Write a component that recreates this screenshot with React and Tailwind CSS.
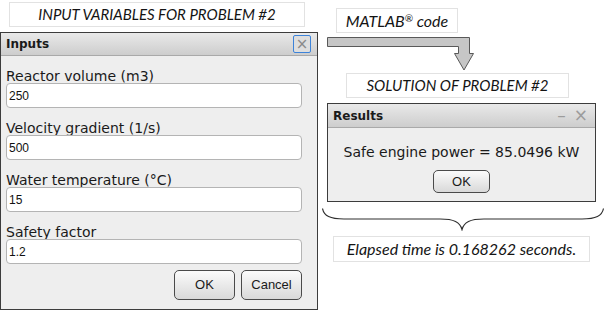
const sans = { fontFamily: '"DejaVu Sans", sans-serif' };

function Caption({ children, className }) {
  return (
    <div
      className={`flex items-center justify-center border border-[#e2e2e2] bg-white italic text-[#141414] ${className}`}
      style={{ fontFamily: 'Lato, "Open Sans", sans-serif' }}
    >
      {children}
    </div>
  );
}

function Button({ label, className }) {
  return (
    <button
      className={`rounded-[5px] border border-[#4a4a4a] bg-gradient-to-b from-[#fbfbfb] to-[#d9d9d9] text-[13px] text-[#1a1a1a] ${className}`}
      style={{ fontFamily: '"Liberation Sans", Arial, sans-serif' }}
    >
      {label}
    </button>
  );
}

function Field({ label, value }) {
  return (
    <div className="flex flex-col">
      <div className="h-[13px] text-[14px] leading-[13px] text-[#1a1a1a]" style={sans}>
        {label}
      </div>
      <div
        className="flex h-[25px] w-[296px] items-center rounded-[4px] border border-[#b4b4b4] bg-white pl-[2px] text-[12px] text-[#111]"
        style={{ fontFamily: '"Liberation Sans", Arial, sans-serif' }}
      >
        {value}
      </div>
    </div>
  );
}

function Arrow() {
  return (
    <svg width="148" height="34" viewBox="0 0 148 34" className="ml-[9px] mt-[4px] block">
      <polygon
        points="0.5,0.5 142.5,0.5 142.5,16.5 146.5,16.5 137,33 127.5,16.5 131.5,16.5 131.5,9.5 0.5,9.5"
        fill="#c6c6c6"
        stroke="#595959"
        strokeWidth="1"
      />
    </svg>
  );
}

function Brace() {
  return (
    <svg width="283" height="23" viewBox="0 0 283 23" className="ml-[4px] mt-[6px] block">
      <path
        d="M0.5,0.5 C2,8 8,11 22,11 L118,11 C132,11 138,14 140,21.5 C142,14 148,11 162,11 L260,11 C274,11 280,8 281.5,0.5"
        fill="none"
        stroke="#2e2e2e"
        strokeWidth="1.2"
      />
    </svg>
  );
}

export default function App() {
  return (
    <div className="flex h-[311px] w-[606px] overflow-hidden bg-white">
      <div className="flex w-[318px] shrink-0 flex-col">
        <Caption className="ml-[9px] mt-[2px] h-[25px] w-[296px] text-[15px]">INPUT VARIABLES FOR PROBLEM #2</Caption>

        <div className="mt-[5px] flex h-[278px] w-[318px] flex-col border border-[#3c3c3c] bg-[#eeeeee]">
          <div className="flex h-[23px] items-center justify-between border-b border-[#a9a9a9] bg-gradient-to-b from-[#e9e9e9] to-[#cdcdcd] pl-[5px] pr-[6px]">
            <span className="text-[12px] font-bold text-[#1a1a1a]" style={sans}>Inputs</span>
            <span className="flex h-[18px] w-[18px] items-center justify-center rounded-[2px] border border-[#3d83d9] bg-[#dedede] text-[15px] leading-none text-[#8a8a8a]" style={sans}>
              ×
            </span>
          </div>
          <div className="flex flex-col gap-[14px] pl-[5px] pt-[14px]">
            <Field label="Reactor volume (m3)" value="250" />
            <Field label="Velocity gradient (1/s)" value="500" />
            <Field label="Water temperature (°C)" value="15" />
            <Field label="Safety factor" value="1.2" />
          </div>
          <div className="mt-[6px] flex gap-[6px] pl-[173px]">
            <Button label="OK" className="h-[30px] w-[61px]" />
            <Button label="Cancel" className="h-[30px] w-[61px]" />
          </div>
        </div>
      </div>

      <div className="flex flex-1 flex-col">
        <Caption className="ml-[18px] mt-[8px] h-[25px] w-[122px] text-[16px]">
          <span>
            MATLAB<sup className="text-[10px]">®</sup> code
          </span>
        </Caption>
        <Arrow />
        <Caption className="ml-[28px] mt-[2px] h-[25px] w-[223px] text-[15px]">SOLUTION OF PROBLEM #2</Caption>

        <div className="ml-[9px] mt-[5px] flex h-[99px] w-[269px] flex-col border border-[#3c3c3c] bg-[#eeeeee]">
          <div className="flex h-[24px] items-center justify-between border-b border-[#a9a9a9] bg-gradient-to-b from-[#e9e9e9] to-[#cdcdcd] pl-[5px] pr-[7px]">
            <span className="text-[12px] font-bold text-[#1a1a1a]" style={sans}>Results</span>
            <span className="flex items-center gap-[8px] text-[17px] leading-none text-[#9c9c9c]" style={sans}>
              <span>–</span>
              <span>×</span>
            </span>
          </div>
          <div className="mt-[14px] text-center text-[14px] text-[#1a1a1a]" style={sans}>
            Safe engine power = 85.0496 kW
          </div>
          <div className="mt-[7px] flex justify-center">
            <Button label="OK" className="h-[23px] w-[57px]" />
          </div>
        </div>

        <Brace />
        <Caption className="ml-[15px] mt-[5px] h-[26px] w-[257px] text-[16px]">Elapsed time is 0.168262 seconds.</Caption>
      </div>
    </div>
  );
}
